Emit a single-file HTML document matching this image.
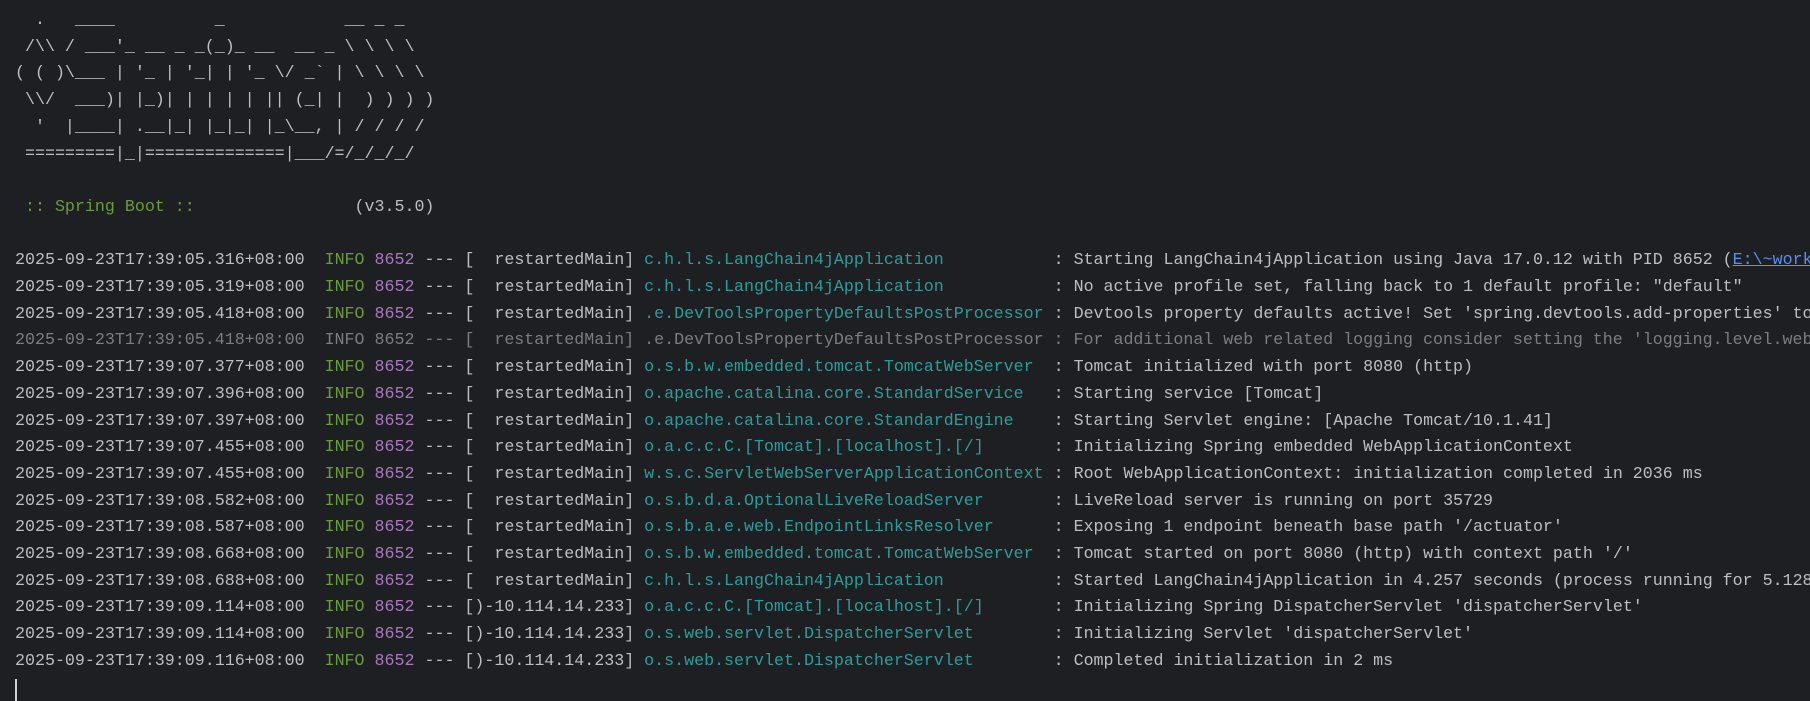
<!DOCTYPE html>
<html><head><meta charset="utf-8"><style>
html,body{margin:0;padding:0;background:#1e1f22;width:1810px;height:701px;overflow:hidden}
pre{margin:0;padding:7px 0 0 15px;font-family:"Liberation Mono","DejaVu Sans Mono",monospace;font-size:16.65px;line-height:26.7px;color:#bcbec4;white-space:pre}
.g{color:#6a9b3c}.p{color:#a779c0}.t{color:#2a9d9a}.d{color:#7a7d82}.l{color:#5a8df5;text-decoration:underline}
.cur{position:absolute;left:15px;top:679px;width:2px;height:22px;background:#ced0d6}
</style></head><body><pre>  .   ____          _            __ _ _
 /\\ / ___'_ __ _ _(_)_ __  __ _ \ \ \ \
( ( )\___ | '_ | '_| | '_ \/ _` | \ \ \ \
 \\/  ___)| |_)| | | | | || (_| |  ) ) ) )
  '  |____| .__|_| |_|_| |_\__, | / / / /
 =========|_|==============|___/=/_/_/_/

<span class="g"> :: Spring Boot ::</span>                (v3.5.0)

2025-09-23T17:39:05.316+08:00  <span class="g">INFO</span> <span class="p">8652</span> --- [  restartedMain] <span class="t">c.h.l.s.LangChain4jApplication          </span> : Starting LangChain4jApplication using Java 17.0.12 with PID 8652 (<span class="l">E:\~work</span>
2025-09-23T17:39:05.319+08:00  <span class="g">INFO</span> <span class="p">8652</span> --- [  restartedMain] <span class="t">c.h.l.s.LangChain4jApplication          </span> : No active profile set, falling back to 1 default profile: "default"
2025-09-23T17:39:05.418+08:00  <span class="g">INFO</span> <span class="p">8652</span> --- [  restartedMain] <span class="t">.e.DevToolsPropertyDefaultsPostProcessor</span> : Devtools property defaults active! Set 'spring.devtools.add-properties' to
<span class="d">2025-09-23T17:39:05.418+08:00  INFO 8652 --- [  restartedMain] .e.DevToolsPropertyDefaultsPostProcessor : For additional web related logging consider setting the 'logging.level.web</span>
2025-09-23T17:39:07.377+08:00  <span class="g">INFO</span> <span class="p">8652</span> --- [  restartedMain] <span class="t">o.s.b.w.embedded.tomcat.TomcatWebServer </span> : Tomcat initialized with port 8080 (http)
2025-09-23T17:39:07.396+08:00  <span class="g">INFO</span> <span class="p">8652</span> --- [  restartedMain] <span class="t">o.apache.catalina.core.StandardService  </span> : Starting service [Tomcat]
2025-09-23T17:39:07.397+08:00  <span class="g">INFO</span> <span class="p">8652</span> --- [  restartedMain] <span class="t">o.apache.catalina.core.StandardEngine   </span> : Starting Servlet engine: [Apache Tomcat/10.1.41]
2025-09-23T17:39:07.455+08:00  <span class="g">INFO</span> <span class="p">8652</span> --- [  restartedMain] <span class="t">o.a.c.c.C.[Tomcat].[localhost].[/]      </span> : Initializing Spring embedded WebApplicationContext
2025-09-23T17:39:07.455+08:00  <span class="g">INFO</span> <span class="p">8652</span> --- [  restartedMain] <span class="t">w.s.c.ServletWebServerApplicationContext</span> : Root WebApplicationContext: initialization completed in 2036 ms
2025-09-23T17:39:08.582+08:00  <span class="g">INFO</span> <span class="p">8652</span> --- [  restartedMain] <span class="t">o.s.b.d.a.OptionalLiveReloadServer      </span> : LiveReload server is running on port 35729
2025-09-23T17:39:08.587+08:00  <span class="g">INFO</span> <span class="p">8652</span> --- [  restartedMain] <span class="t">o.s.b.a.e.web.EndpointLinksResolver     </span> : Exposing 1 endpoint beneath base path '/actuator'
2025-09-23T17:39:08.668+08:00  <span class="g">INFO</span> <span class="p">8652</span> --- [  restartedMain] <span class="t">o.s.b.w.embedded.tomcat.TomcatWebServer </span> : Tomcat started on port 8080 (http) with context path '/'
2025-09-23T17:39:08.688+08:00  <span class="g">INFO</span> <span class="p">8652</span> --- [  restartedMain] <span class="t">c.h.l.s.LangChain4jApplication          </span> : Started LangChain4jApplication in 4.257 seconds (process running for 5.128
2025-09-23T17:39:09.114+08:00  <span class="g">INFO</span> <span class="p">8652</span> --- [)-10.114.14.233] <span class="t">o.a.c.c.C.[Tomcat].[localhost].[/]      </span> : Initializing Spring DispatcherServlet 'dispatcherServlet'
2025-09-23T17:39:09.114+08:00  <span class="g">INFO</span> <span class="p">8652</span> --- [)-10.114.14.233] <span class="t">o.s.web.servlet.DispatcherServlet       </span> : Initializing Servlet 'dispatcherServlet'
2025-09-23T17:39:09.116+08:00  <span class="g">INFO</span> <span class="p">8652</span> --- [)-10.114.14.233] <span class="t">o.s.web.servlet.DispatcherServlet       </span> : Completed initialization in 2 ms</pre><div class="cur"></div></body></html>
